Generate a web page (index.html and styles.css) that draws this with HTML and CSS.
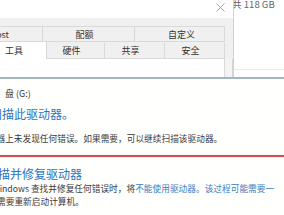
FILE: index.html
```html
<!DOCTYPE html>
<html lang="zh-CN">
<head>
<meta charset="utf-8">
<link rel="stylesheet" href="styles.css">
</head>
<body>
<div class="screen">
  <div class="upper">
    <div class="left">
      <div class="strip">
        <svg class="close" width="9" height="9" viewBox="0 0 9 9"><path d="M0.5 0.5 L8.5 8.5 M8.5 0.5 L0.5 8.5" stroke="#9a9a9a" stroke-width="0.9" fill="none"/></svg>
      </div>
      <div class="dialog">
        <div class="tabrow row1">
          <div class="tab first">ReadyBoost</div>
          <div class="tab">配额</div>
          <div class="tab">自定义</div>
        </div>
        <div class="tabrow row2">
          <div class="tab sel">工具</div>
          <div class="tab">硬件</div>
          <div class="tab">共享</div>
          <div class="tab">安全</div>
        </div>
        <div class="panelrow">
          <div class="panel"></div>
          <div class="gutter"></div>
        </div>
      </div>
    </div>
    <div class="right">
      <div class="rtop"><span class="size">共 118 GB</span></div>
    </div>
  </div>
  <div class="blueline"></div>
  <div class="lower">
    <div class="drive">盘 (G:)</div>
    <div class="head h1">扫描此驱动器。</div>
    <div class="text t1">驱动器上未发现任何错误。如果需要，可以继续扫描该驱动器。</div>
    <div class="redline"></div>
    <div class="head h2">扫描并修复驱动器</div>
    <div class="text t2">Windows 查找并修复任何错误时，将<span class="hl">不能使用驱动器。该过程可能需要一</span></div>
    <div class="text t3">需要重新启动计算机。</div>
  </div>
</div>
</body>
</html>
```
FILE: styles.css
```css
* { box-sizing: border-box; }
html, body { margin: 0; padding: 0; }
body {
  width: 284px;
  height: 215px;
  overflow: hidden;
  background: #ffffff;
  font-family: "Noto Sans CJK SC", "Noto Sans", sans-serif;
  color: #333;
}
.screen { width: 284px; height: 215px; overflow: hidden; }

.upper { display: flex; height: 77px; }
.left { width: 233px; display: flex; flex-direction: column; }
.strip {
  height: 18px;
  background: #fff;
  display: flex;
  justify-content: flex-end;
  align-items: flex-start;
  padding: 3px 8px 0 0;
}
.close { display: block; }
.dialog {
  flex: 1;
  background: #f0f0f0;
  padding-top: 8px;
  display: flex;
  flex-direction: column;
}
.tabrow {
  display: grid;
  width: 225px;
  font-size: 9px;
  color: #333;
}
.row1 {
  grid-template-columns: 43px 92px 90px;
  height: 16px;
  border-top: 1px solid #d9d9d9;
  border-bottom: 1px solid #d9d9d9;
}
.row2 {
  grid-template-columns: 47px 58px 60px 60px;
  height: 17px;
}
.tab {
  display: flex;
  align-items: center;
  justify-content: center;
  border-right: 1px solid #d9d9d9;
  white-space: nowrap;
  line-height: 1;
  padding-right: 8px;
}
.row1 .tab:last-child { padding-right: 0; padding-left: 4px; }
.tab.first {
  justify-content: flex-end;
  padding-right: 33px;
  overflow: hidden;
}
.row2 .tab {
  margin-top: 1px;
  background: #f0f0f0;
  border-bottom: 1px solid #d9d9d9;
}
.row2 .tab.sel {
  margin-top: 0;
  background: #ffffff;
  border-bottom: none;
  justify-content: flex-start;
  padding-left: 5px;
}
.panelrow { flex: 1; display: flex; }
.panel {
  width: 225px;
  background: #ffffff;
  border-right: 1px solid #d9d9d9;
}
.gutter {
  flex: 1;
  background: #f4f4f4;
  border-right: 1px solid #d6d6d6;
}

.right { flex: 1; background: #fff; border-left: 1px solid #d2d2d2; }
.rtop {
  height: 70px;
  border-bottom: 1px solid #ececec;
  overflow: hidden;
}
.size {
  display: block;
  margin-left: -2px;
  margin-top: -1px;
  font-size: 9.6px;
  line-height: 11px;
  color: #666;
  white-space: nowrap;
}

.blueline { height: 2px; background: #a2b5c2; }

.lower {
  height: 136px;
  background: #fffffd;
  padding-top: 9px;
  white-space: nowrap;
}
.drive {
  font-size: 9px;
  line-height: 12px;
  margin-left: 5px;
  color: #333;
}
.head {
  font-size: 12px;
  line-height: 16px;
  color: #2a74c0;
}
.h1 { margin-top: 6px; margin-left: -10px; }
.h2 { margin-top: 9px; margin-left: -14px; }
.text {
  font-size: 8.7px;
  line-height: 13px;
  color: #3a3a3a;
}
.t1 { margin-top: 10px; margin-left: -21px; }
.t2 { margin-top: 0; margin-left: -8px; }
.t3 { margin-left: -3px; }
.hl { color: #3d7dbd; }
.redline {
  margin-top: 10px;
  height: 2px;
  background: #cf4f52;
  box-shadow: 0 0 1px #e9a3a5;
}
```
